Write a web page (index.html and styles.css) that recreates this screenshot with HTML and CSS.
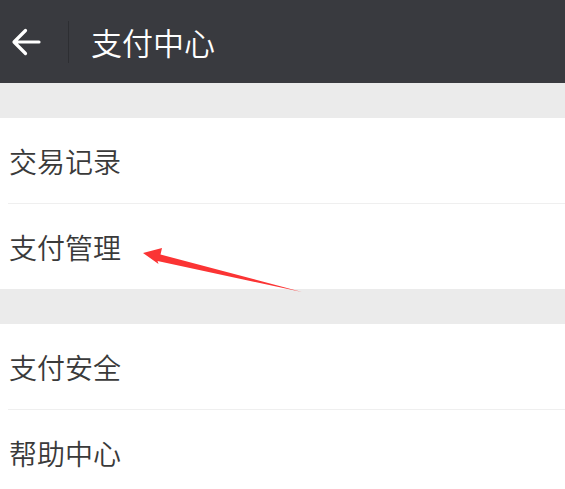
FILE: index.html
```html
<!DOCTYPE html>
<html lang="zh">
<head>
<meta charset="utf-8">
<link rel="stylesheet" href="styles.css">
</head>
<body>
<div class="page">
  <header class="topbar">
    <span class="back">
      <svg width="30" height="30" viewBox="0 0 30 30"><path d="M28 15H3.5M14.5 3.5L3 15l11.5 11.5" fill="none" stroke="#fff" stroke-width="3.2" stroke-linecap="round" stroke-linejoin="round"/></svg>
    </span>
    <span class="sep"></span>
    <span class="title">支付中心</span>
  </header>
  <div class="band"></div>
  <div class="group">
    <div class="row">交易记录</div>
    <div class="row">支付管理</div>
  </div>
  <div class="band"></div>
  <div class="group">
    <div class="row">支付安全</div>
    <div class="row">帮助中心</div>
  </div>
  <svg class="pointer" width="565" height="489" viewBox="0 0 565 489"><polygon points="143,253 162,248 160.5,254.5 302,292 157.5,261 158.5,264" fill="#fb3434"/></svg>
</div>
</body>
</html>
```
FILE: styles.css
```css
html, body { margin: 0; padding: 0; background: #fff; }
body { font-family: "Noto Sans CJK SC", "Noto Sans", sans-serif; }
.page { position: relative; width: 565px; height: 489px; overflow: hidden; }
.topbar { height: 83px; background: #393a3f; display: flex; align-items: center; }
.back { width: 30px; height: 30px; margin-left: 11px; display: flex; }
.sep { width: 1px; height: 42px; background: #2d2e32; margin-left: 27px; }
.title { color: #fff; font-size: 31px; font-weight: 350; margin-left: 22px; line-height: 1; }
.band { height: 35px; background: #ebebeb; }
.group { background: #fff; }
.row { height: 85px; display: flex; align-items: center; padding-left: 9px; font-size: 28px; font-weight: 350; color: #3a3a3a; position: relative; }
.row + .row { border-top: 1px solid #efefef; margin-left: 8px; padding-left: 1px; }
.pointer { position: absolute; left: 0; top: 0; pointer-events: none; }
```
